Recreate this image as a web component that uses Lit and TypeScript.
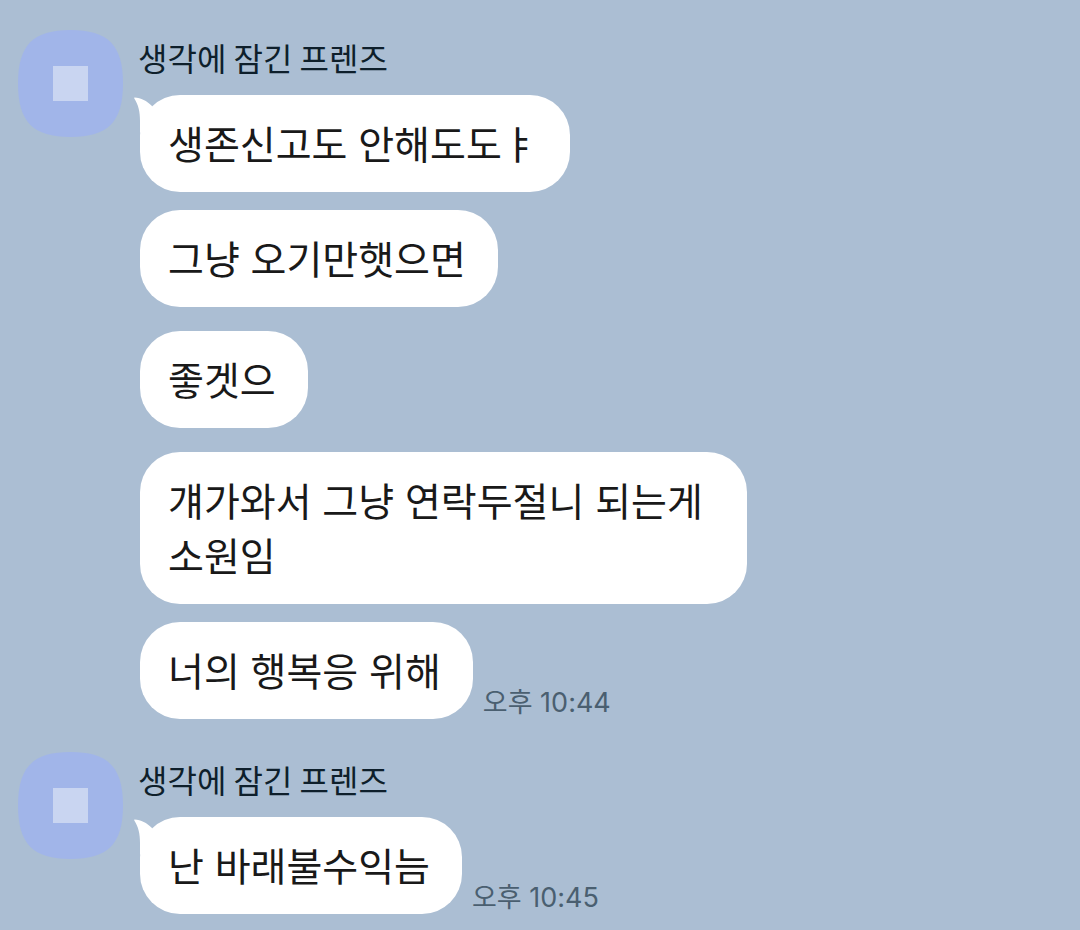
import { LitElement, html, css, svg } from "lit";
import { customElement, property } from "lit/decorators.js";
import { classMap } from "lit/directives/class-map.js";

interface Message {
  text: string;
  time?: string;
  spaced?: boolean;
}

interface Group {
  sender: string;
  messages: Message[];
}

const GROUPS: Group[] = [
  {
    sender: "생각에 잠긴 프렌즈",
    messages: [
      { text: "생존신고도 안해도도ㅑ" },
      { text: "그냥 오기만햇으면" },
      { text: "좋겟으", spaced: true },
      { text: "걔가와서 그냥 연락두절니 되는게 소원임", spaced: true },
      { text: "너의 행복응 위해", time: "오후 10:44" },
    ],
  },
  {
    sender: "생각에 잠긴 프렌즈",
    messages: [{ text: "난 바래불수익늠", time: "오후 10:45" }],
  },
];

@customElement("chat-group")
export class ChatGroup extends LitElement {
  @property({ attribute: false }) group!: Group;

  static styles = css`
    :host {
      display: grid;
      grid-template-columns: 106px minmax(0, 1fr);
      column-gap: 14px;
    }
    .avatar {
      display: block;
      width: 106px;
      height: 107px;
    }
    .name {
      margin: 0;
      padding-bottom: 10px;
      font-size: 32px;
      line-height: 55px;
      font-weight: 400;
      font-family: "Noto Sans CJK KR", sans-serif;
      color: #0e1f2b;
    }
    .list {
      margin: 0;
      padding: 0 0 0 2px;
      list-style: none;
    }
    .row {
      display: flex;
      align-items: flex-end;
      gap: 10px;
    }
    .row + .row {
      margin-top: 18px;
    }
    .row + .row.spaced {
      margin-top: 24px;
    }
    .bubble {
      position: relative;
      box-sizing: border-box;
      max-width: 607px;
      padding: 23px 32px 19px 28px;
      border-radius: 40px;
      background: #fff;
      color: #191919;
      font-size: 39px;
      line-height: 55px;
      word-break: keep-all;
      overflow-wrap: anywhere;
    }
    .tail {
      position: absolute;
      left: -6px;
      top: 2px;
      width: 24px;
      height: 36px;
    }
    .time {
      flex: none;
      color: #4a5f70;
      font-family: Inter, "Noto Sans CJK KR", sans-serif;
      font-size: 27px;
      line-height: 33px;
      font-weight: 400;
    }
  `;

  render() {
    return html`
      <svg class="avatar" viewBox="0 0 106 107" aria-hidden="true">
        <path
          fill="#a1b5e9"
          d="M52.500 0C90 0 105 15 105 53.500S90 107 52.500 107 0 92 0 53.500 15 0 52.500 0Z"
        />
        <rect x="35" y="36" width="35" height="35" fill="#c9d5f1" />
      </svg>
      <div>
        <h2 class="name">${this.group.sender}</h2>
        <ul class="list">
          ${this.group.messages.map(
            (m, i) => html`
              <li class=${classMap({ row: true, spaced: !!m.spaced })}>
                <div class="bubble">
                  ${i === 0
                    ? html`<svg class="tail" viewBox="0 0 24 36" aria-hidden="true">
                        ${svg`<path fill="#fff" d="M0.5 0.5C7 1 13 4 17.5 8.5L24 20L6 36V24C6 15 4.500 8 0.300 1.600Q0 0.500 0.500 0.500Z" />`}
                      </svg>`
                    : null}${m.text}
                </div>
                ${m.time ? html`<time class="time">${m.time}</time>` : null}
              </li>
            `
          )}
        </ul>
      </div>
    `;
  }
}

@customElement("app-root")
export class AppRoot extends LitElement {
  static styles = css`
    :host {
      display: block;
      box-sizing: border-box;
      min-height: 100vh;
      padding: 30px 18px 16px;
      background: #abbed3;
      font-family: "Liberation Sans", "Noto Sans CJK KR", sans-serif;
    }
    .chat {
      display: flex;
      flex-direction: column;
      gap: 33px;
    }
  `;

  render() {
    return html`
      <main class="chat">
        ${GROUPS.map((g) => html`<chat-group .group=${g}></chat-group>`)}
      </main>
    `;
  }
}
